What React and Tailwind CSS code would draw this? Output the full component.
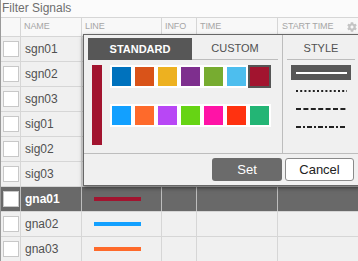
import React from "react";
import { FaCog } from "react-icons/fa";

const rows = [
  { name: "sgn01" },
  { name: "sgn02" },
  { name: "sgn03" },
  { name: "sig01" },
  { name: "sig02" },
  { name: "sig03" },
  { name: "gna01", color: "#a2142f", selected: true },
  { name: "gna02", color: "#12a0ff" },
  { name: "gna03", color: "#fe6a2b" },
];

const row1 = ["#0072bd", "#d95319", "#edb120", "#7e2f8e", "#77ac30", "#4dbeee", "#a2142f"];
const row2 = ["#12a0ff", "#fe6a2b", "#b847f5", "#66d414", "#ff13a6", "#ff3210", "#23b575"];

function Swatches({ colors, selectedIndex }) {
  return (
    <div className="flex gap-[4px] bg-white p-[2px] w-[161px] h-[23px]">
      {colors.map((c, i) => (
        <div
          key={i}
          className={
            i === selectedIndex
              ? "w-[19px] h-[19px] outline-2 outline-[#555555]"
              : "w-[19px] h-[19px]"
          }
          style={{ backgroundColor: c }}
        />
      ))}
    </div>
  );
}

function LineOpt({ dash, selected }) {
  return (
    <div
      className={
        selected
          ? "w-[60px] h-[15px] bg-[#575757] flex items-center justify-center"
          : "w-[60px] h-[15px] flex items-center justify-center"
      }
    >
      <svg width="51" height="2" viewBox="0 0 51 2">
        <line
          x1="0"
          y1="1"
          x2="51"
          y2="1"
          stroke={selected ? "#ffffff" : "#222222"}
          strokeWidth="2"
          strokeDasharray={dash}
        />
      </svg>
    </div>
  );
}

export default function App() {
  const cols = "grid grid-cols-[20px_61px_80px_35px_81px_1fr]";
  return (
    <div
      className="relative w-[358px] h-[261px] overflow-hidden bg-[#f0f0f0] border-l border-[#9a9a9a]"
      style={{ fontFamily: '"Liberation Sans", Arial, sans-serif' }}
    >
      <div className="h-[17px] bg-[#fbfbfb] pl-[1px] text-[12px] leading-[17px] text-[#6e6e6e]">
        Filter Signals
      </div>
      <div
        className={`${cols} h-[20px] bg-[#f8f8f8] border-t border-b border-[#d6d6d6] text-[9px] text-[#a6a6a6] tracking-[-0.1px]`}
      >
        <div className="border-r border-[#d6d6d6]" />
        <div className="border-r border-[#d6d6d6] pl-[3px] flex items-center">NAME</div>
        <div className="border-r border-[#d6d6d6] pl-[3px] flex items-center">LINE</div>
        <div className="border-r border-[#d6d6d6] pl-[3px] flex items-center">INFO</div>
        <div className="border-r border-[#d6d6d6] pl-[3px] flex items-center">TIME</div>
        <div className="pl-[4px] pr-[1px] flex items-center justify-between">
          <span>START TIME</span>
          <FaCog className="text-[#c4c4c4]" size={10} />
        </div>
      </div>
      {rows.map((r) => {
        const sep = r.selected ? "border-[#bdbdbd]" : "border-[#d6d6d6]";
        return (
          <div
            key={r.name}
            className={`${cols} h-[25px] border-b border-[#d6d6d6] ${
              r.selected ? "bg-[#696969] text-white font-bold" : "text-[#505050]"
            } text-[12px]`}
          >
            <div className={`border-r ${sep} flex items-center pl-[2px]`}>
              <div className="w-[16px] h-[16px] bg-white border border-[#c8c8c8]" />
            </div>
            <div className={`border-r ${sep} flex items-center pl-[4px]`}>{r.name}</div>
            <div className={`border-r ${sep} flex items-center pl-[12px]`}>
              {r.color && (
                <div className="w-[47px] h-[4px] -mt-[1px]" style={{ backgroundColor: r.color }} />
              )}
            </div>
            <div className={`border-r ${sep}`} />
            <div className={`border-r ${sep}`} />
            <div />
          </div>
        );
      })}

      {/* popup */}
      <div className="absolute left-[82px] top-[34px] w-[282px] h-[152px] bg-[#f0f0f0] border border-[#676767] shadow-[0_2px_4px_rgba(0,0,0,0.5)] flex flex-col">
        <div className="h-[118px] flex">
          <div className="w-[198px] flex flex-col">
            <div className="flex mt-[3px] ml-[4px] h-[22px]">
              <div className="w-[104px] bg-[#575757] text-white font-bold text-[11px] flex items-center justify-center">
                STANDARD
              </div>
              <div className="w-[86px] border-b border-[#bdbdbd] text-[#505050] text-[11px] flex items-center justify-center">
                CUSTOM
              </div>
            </div>
            <div className="flex mt-[5px] ml-[8px] gap-[8px]">
              <div className="w-[10px] h-[80px] bg-[#a2142f]" />
              <div className="flex flex-col gap-[16px]">
                <Swatches colors={row1} selectedIndex={6} />
                <Swatches colors={row2} selectedIndex={-1} />
              </div>
            </div>
          </div>
          <div className="flex-1 border-l border-[#bdbdbd] flex flex-col">
            <div className="mt-[3px] ml-[4px] w-[68px] h-[22px] border-b border-[#bdbdbd] text-[#505050] text-[11px] flex items-center justify-center">
              STYLE
            </div>
            <div className="mt-[5px] ml-[8px] flex flex-col gap-[3px]">
              <LineOpt selected dash="none" />
              <LineOpt dash="2 2.2" />
              <LineOpt dash="5 2.4" />
              <LineOpt dash="5 2 2 2" />
            </div>
          </div>
        </div>
        <div className="flex-1 border-t border-[#bdbdbd] flex justify-start items-start pt-[4px] pl-[128px] gap-[3px]">
          <button className="w-[70px] h-[23px] rounded-[3px] bg-[#6b6b6b] text-white text-[13px] flex items-center justify-center">
            Set
          </button>
          <button className="w-[69px] h-[23px] rounded-[3px] bg-white border border-[#8a8a8a] text-[#222] text-[13px] flex items-center justify-center">
            Cancel
          </button>
        </div>
      </div>
    </div>
  );
}
